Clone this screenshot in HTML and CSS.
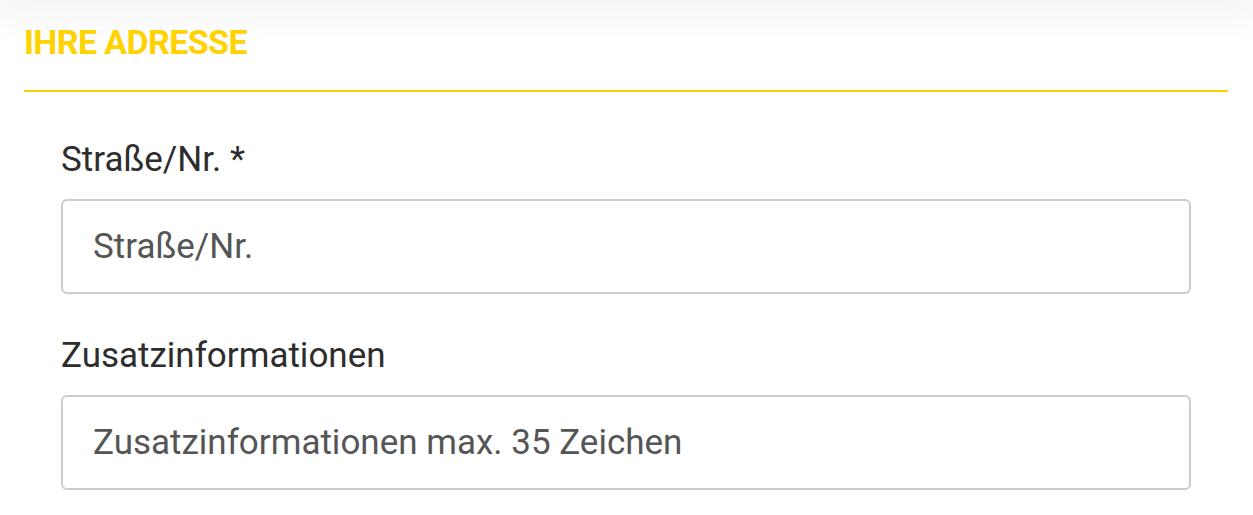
FILE: index.html
```html
<!DOCTYPE html>
<html lang="de">
<head>
<meta charset="utf-8">
<title>Ihre Adresse</title>
<link rel="stylesheet" href="styles.css">
</head>
<body>
<div class="topshadow"></div>
<section class="section">
  <h2 class="section-title">IHRE ADRESSE</h2>
  <form class="form">
    <div class="field">
      <label class="label" for="street">Straße/Nr. *</label>
      <input class="input" id="street" type="text" placeholder="Straße/Nr.">
    </div>
    <div class="field">
      <label class="label" for="extra">Zusatzinformationen</label>
      <input class="input" id="extra" type="text" placeholder="Zusatzinformationen max. 35 Zeichen">
    </div>
  </form>
</section>
</body>
</html>
```

FILE: styles.css
```css
html, body {
  margin: 0;
  padding: 0;
  background: #fff;
}
body {
  font-family: Roboto, "Noto Sans", sans-serif;
  overflow: hidden;
}
.topshadow {
  height: 0;
  box-shadow: 0 0 40px 12px rgba(0, 0, 0, 0.07);
}
.section {
  padding: 0 25px 0 24px;
}
.section-title {
  margin: 0;
  padding-top: 22px;
  height: 92px;
  box-sizing: border-box;
  border-bottom: 2px solid #ffd200;
  color: #ffd200;
  font-size: 34px;
  line-height: 40px;
  font-weight: 700;
  letter-spacing: -0.6px;
}
.form {
  padding: 48px 37px 0 37px;
  display: flex;
  flex-direction: column;
  gap: 42px;
}
.field {
  display: flex;
  flex-direction: column;
  gap: 19px;
}
.label {
  color: #2d2d2d;
  font-size: 35px;
  line-height: 40px;
}
.input {
  display: block;
  box-sizing: border-box;
  width: 100%;
  height: 95px;
  margin: 0;
  padding: 0 30px;
  border: 2px solid #cccccc;
  border-radius: 6px;
  background: #fff;
  font-family: Roboto, "Noto Sans", sans-serif;
  font-size: 35px;
  color: #333;
  outline: none;
}
.input::placeholder {
  color: #555555;
  opacity: 1;
}
```
